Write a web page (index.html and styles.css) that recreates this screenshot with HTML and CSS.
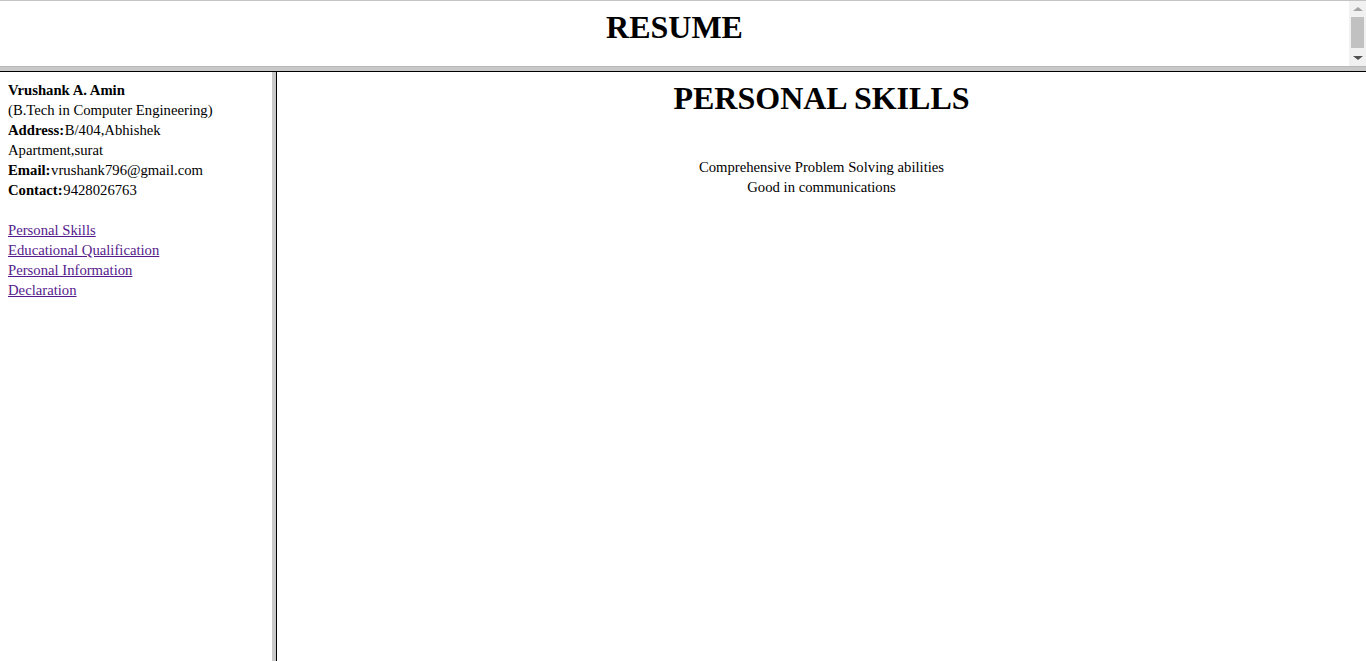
FILE: index.html
```html
<!DOCTYPE html>
<html>
<head>
    <title>Resume</title>
    <link rel="stylesheet" href="styles.css">
</head>
<body>
    <div class="frames">
        <div class="top-frame">
            <div class="top-body">
                <h1 class="title">RESUME</h1>
            </div>
            <div class="scrollbar">
                <div class="arrow up"></div>
                <div class="thumb"></div>
                <div class="track"></div>
                <div class="arrow down"></div>
            </div>
        </div>
        <div class="h-border"></div>
        <div class="bottom">
            <div class="left-frame">
                <b>Vrushank A. Amin</b><br>
                (B.Tech in Computer Engineering)<br>
                <b>Address:</b> B/404,Abhishek<br>
                Apartment,surat<br>
                <b>Email:</b> vrushank796@gmail.com<br>
                <b>Contact:</b> 9428026763<br>
                <br>
                <a href="#skills">Personal Skills</a><br>
                <a href="#edu">Educational Qualification</a><br>
                <a href="#info">Personal Information</a><br>
                <a href="#decl">Declaration</a>
            </div>
            <div class="v-border"></div>
            <div class="right-frame">
                <h1 class="heading">PERSONAL SKILLS</h1>
                <p class="skills">
                    Comprehensive Problem Solving abilities<br>
                    Good in communications
                </p>
            </div>
        </div>
    </div>
</body>
</html>
```

FILE: styles.css
```css
html, body { margin: 0; padding: 0; height: 100%; overflow: hidden; }
body { font-family: "Liberation Serif", "Times New Roman", serif; font-size: 14.7px; color: #000; background: #fff; }

.frames { display: flex; flex-direction: column; height: 661px; }

.top-frame { display: flex; height: 66px; border-top: 1px solid #c4c4c4; box-sizing: border-box; }
.top-body { flex: 1; }
.title { margin: 0; padding-top: 8px; text-align: center; font-size: 32px; font-weight: bold; line-height: 37px; }

.scrollbar { width: 17px; background: #f1f1f1; display: flex; flex-direction: column; align-items: center; }
.arrow { width: 0; height: 0; border-left: 5px solid transparent; border-right: 5px solid transparent; margin: 6px 0; }
.arrow.up { border-bottom: 4px solid #a3a3a3; }
.arrow.down { border-top: 4px solid #505050; margin-top: 2px; }
.thumb { width: 13px; height: 31px; background: #c1c1c1; }
.track { flex: 1; }

.h-border { height: 6px; background: #c8c8c8; border-top: 1px solid #b8b8b8; border-bottom: 1px solid #000; box-sizing: border-box; }

.bottom { flex: 1; display: flex; min-height: 0; }
.left-frame { width: 256px; padding: 8px; line-height: 20px; }
.left-frame b { margin-right: -3px; }
.left-frame a { color: #551a8b; }
.v-border { width: 4px; background: #c8c8c8; border-right: 1px solid #000; }
.right-frame { flex: 1; text-align: center; }
.heading { margin: 8px 0 0; font-size: 32px; font-weight: bold; line-height: 37px; }
.skills { margin: 40px 0 0; line-height: 20px; }
```
